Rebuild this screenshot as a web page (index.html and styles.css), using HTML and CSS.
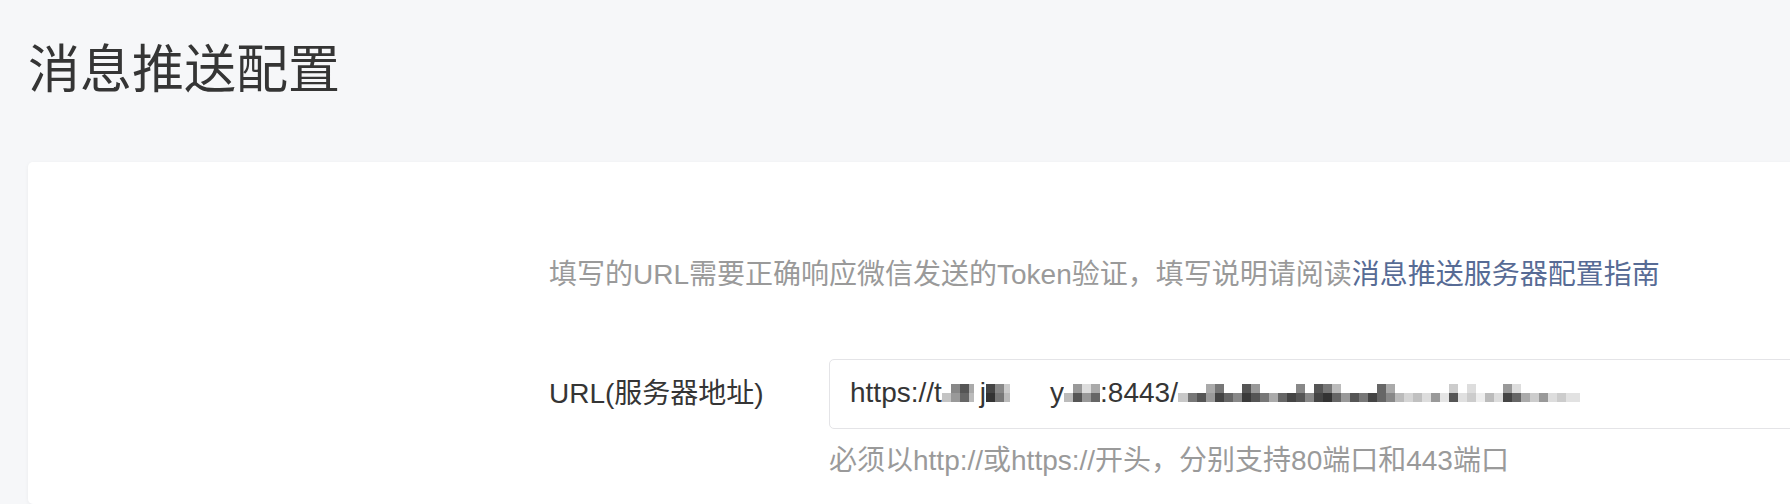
FILE: index.html
```html
<!DOCTYPE html>
<html lang="zh-CN">
<head>
  <meta charset="UTF-8" />
  <meta name="viewport" content="width=device-width, initial-scale=1.0"/>
  <title>消息推送配置</title>
  <link rel="stylesheet" href="styles.css">
</head>
<body>

  <div class="page">
    <h2 class="page-title">消息推送配置</h2>

    <div class="card">
      <div class="form">
        <p class="form-tips">填写的URL需要正确响应微信发送的Token验证，填写说明请阅读<a href="#">消息推送服务器配置指南</a></p>

        <div class="form-row">
          <label class="form-label">URL(服务器地址)</label>
          <div class="form-control">
            <div class="input-box">https://t<span class="mosaic mosaic-a"></span><span class="gap gap-s"></span>j<span class="mosaic mosaic-b"></span><span class="gap"></span>y<span class="mosaic mosaic-c"></span>:8443/<span class="mosaic mosaic-d"></span></div>
            <p class="form-desc">必须以http://或https://开头，分别支持80端口和443端口</p>
          </div>
        </div>
      </div>
    </div>
  </div>

</body>
</html>
```

FILE: styles.css
```css
body {
  margin: 0;
  background: #f6f7f9;
  font-family: 'Liberation Sans', 'Noto Sans CJK SC', sans-serif;
  color: #353535;
  overflow: hidden;
}

.page {
  padding-left: 28px;
}

.page-title {
  margin: 0;
  padding-top: 34px;
  font-size: 52px;
  line-height: 72px;
  font-weight: normal;
  color: #353535;
}

.card {
  box-sizing: border-box;
  height: 342px;
  margin-top: 56px;
  margin-right: -20px;
  background: #fff;
  border-radius: 5px;
  box-shadow: 0 1px 4px rgba(0,0,0,0.05);
  padding: 93px 0 0 521px;
}

.form-tips {
  margin: 0;
  font-size: 28px;
  line-height: 40px;
  color: #9a9a9a;
}

.form-tips a {
  color: #576b95;
  text-decoration: none;
}

.form-row {
  display: flex;
  margin-top: 64px;
}

.form-label {
  width: 280px;
  flex-shrink: 0;
  font-size: 28px;
  line-height: 40px;
  padding-top: 15px;
  color: #353535;
}

.form-control {
  flex: 1;
}

.input-box {
  height: 70px;
  box-sizing: border-box;
  border: 1px solid #e4e4e7;
  border-radius: 5px;
  padding: 0 20px;
  font-size: 28px;
  line-height: 66px;
  color: #353535;
  white-space: nowrap;
}

/* pixelated part of the url */
.mosaic {
  display: inline-block;
  height: 18px;
  vertical-align: baseline;
}

.gap {
  display: inline-block;
  width: 40px;
}

.gap-s {
  width: 6px;
}

.mosaic-a {
  width: 32px;
  background:
    linear-gradient(to right, #fff 0 9px, #888 9px 18px, #555 18px 27px, #aaa 27px) top / 100% 9px no-repeat,
    linear-gradient(to right, #c4c4c4 0 9px, #999 9px 18px, #666 18px 27px, #bbb 27px) bottom / 100% 9px no-repeat;
}

.mosaic-b {
  width: 24px;
  background:
    linear-gradient(to right, #444 0 9px, #888 9px 18px, #ccc 18px) top / 100% 9px no-repeat,
    linear-gradient(to right, #333 0 9px, #777 9px 18px, #bbb 18px) bottom / 100% 9px no-repeat;
}

.mosaic-c {
  width: 36px;
  background:
    linear-gradient(to right, #fff 0 9px, #999 9px 18px, #ddd 18px 27px, #aaa 27px) top / 100% 9px no-repeat,
    linear-gradient(to right, #bbb 0 9px, #555 9px 18px, #999 18px 27px, #666 27px) bottom / 100% 9px no-repeat;
}

.mosaic-d {
  width: 402px;
  background:
    linear-gradient(to right, #fff 0 28px, #aaa 28px 37px, #777 37px 46px, #fff 46px 64px, #555 64px 73px, #999 73px 82px, #fff 82px 118px, #888 118px 127px, #fff 127px 136px, #555 136px 145px, #777 145px 154px, #bbb 154px 163px, #fff 163px 199px, #666 199px 208px, #aaa 208px 217px, #fff 217px 271px, #ccc 271px 280px, #fff 280px 289px, #ddd 289px 298px, #fff 298px 325px, #999 325px 334px, #ddd 334px 343px, #fff 343px) top / 100% 9px no-repeat,
    linear-gradient(to right, #c8c8c8 0 10px, #777 10px 19px, #555 19px 28px, #9a9a9a 28px 37px, #444 37px 46px, #666 46px 55px, #888 55px 64px, #3a3a3a 64px 73px, #555 73px 82px, #777 82px 91px, #aaa 91px 100px, #666 100px 109px, #444 109px 118px, #555 118px 127px, #888 127px 136px, #444 136px 145px, #333 145px 154px, #666 154px 163px, #999 163px 172px, #555 172px 181px, #777 181px 190px, #444 190px 199px, #666 199px 208px, #888 208px 217px, #bbb 217px 226px, #d5d5d5 226px 235px, #c0c0c0 235px 244px, #ddd 244px 253px, #999 253px 262px, #e5e5e5 262px 271px, #555 271px 280px, #e0e0e0 280px 289px, #ccc 289px 298px, #eee 298px 307px, #bbb 307px 316px, #ddd 316px 325px, #444 325px 334px, #666 334px 343px, #aaa 343px 352px, #ccc 352px 361px, #999 361px 370px, #ddd 370px 379px, #ccc 379px 388px, #e2e2e2 388px) bottom / 100% 9px no-repeat;
}

.form-desc {
  margin: 12px 0 0;
  font-size: 28px;
  line-height: 40px;
  color: #9a9a9a;
}
```
